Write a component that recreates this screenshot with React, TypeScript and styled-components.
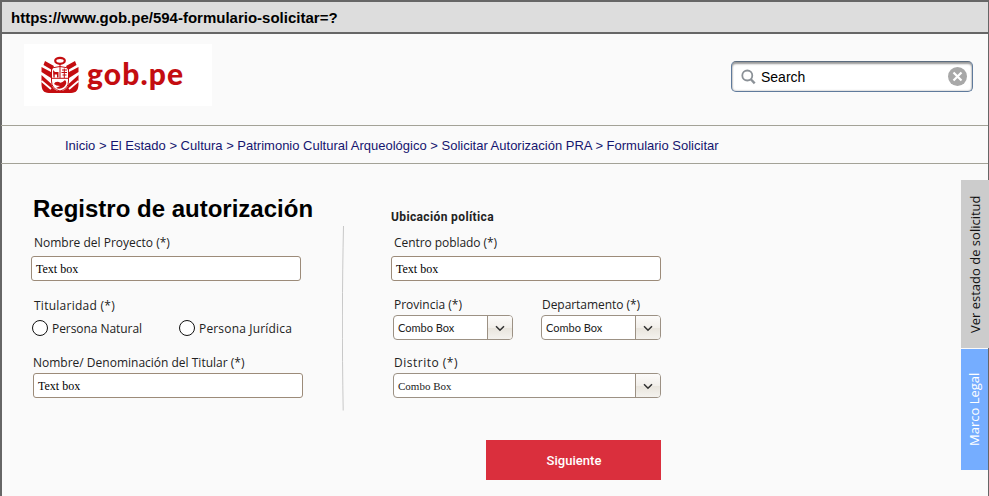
import React from 'react';
import styled, { createGlobalStyle } from 'styled-components';

const GlobalStyle = createGlobalStyle`
  * { box-sizing: border-box; }
  body { margin: 0; background: #fafafa; overflow: hidden; }
`;

const Window = styled.div`
  display: flex;
  flex-direction: column;
  height: 496px;
  width: 989px;
  border: solid #666;
  border-width: 2px 1px 0 2px;
  background: #fafafa;
  color: #000;
  font-family: 'Liberation Sans', Arial, sans-serif;
`;

const AddressBar = styled.div`
  height: 32px;
  flex: none;
  padding-left: 9px;
  border-bottom: 2px solid #666;
  background: #ddd;
  font-size: 15px;
  font-weight: bold;
  line-height: 31px;
`;

const Header = styled.header`
  display: flex;
  flex: none;
  justify-content: space-between;
  height: 91px;
  padding: 10px 15px 0 22px;
`;

const Logo = styled.div`
  display: flex;
  width: 188px;
  height: 62px;
  padding: 12px 0 0 17px;
  background: #fff;
  color: #c40d10;
`;

const LogoText = styled.span`
  margin: -3px 0 0 8px;
  font: 900 30px/40px Lato, sans-serif;
  letter-spacing: 1.1px;
`;

const SearchBox = styled.div`
  display: flex;
  align-items: center;
  width: 242px;
  height: 31px;
  margin-top: 17px;
  padding: 0 5px 0 9px;
  border: 1px solid #5f7a9c;
  border-top-color: #5c6d80;
  border-radius: 5px;
  background: #fff;
  box-shadow: inset 0 2px 2px #999, inset 0 0 2px #999;
`;

const SearchText = styled.span`
  flex: 1;
  margin-left: 5px;
  font-size: 14px;
`;

const Breadcrumbs = styled.nav`
  flex: none;
  height: 39px;
  margin-left: -1px;
  padding-left: 64px;
  border: solid #a3a297;
  border-width: 1px 0;
  color: #15156f;
  font-size: 13px;
  line-height: 39px;
  white-space: pre;
`;

const Main = styled.main`
  display: grid;
  grid-template-columns: 311px 49px 270px 1fr;
  flex: 1;
  padding-left: 29px;
  margin-right: -1px;
`;

const Column = styled.section<{ $top: number }>`
  padding-top: ${(p) => p.$top}px;
`;

const Title = styled.h1`
  margin: 0 0 0 2px;
  font-size: 24px;
  line-height: 30px;
  white-space: nowrap;
`;

const Subtitle = styled.h2`
  margin: 0;
  font: bold 12px/18px Roboto, sans-serif;
  letter-spacing: 0.37px;
  color: #222;
`;

const Label = styled.div<{ $top?: number; $bottom?: number; $left?: number; $spacing?: number }>`
  margin: ${(p) => p.$top ?? 0}px 0 ${(p) => p.$bottom ?? 0}px ${(p) => p.$left ?? 0}px;
  color: #222;
  font: 12px/18px 'Open Sans', sans-serif;
  letter-spacing: ${(p) => p.$spacing ?? 0}px;
  white-space: nowrap;
`;

const TextBox = styled.div<{ $indent?: number }>`
  width: 270px;
  height: 25px;
  margin-left: ${(p) => p.$indent ?? 0}px;
  padding-left: 4px;
  border: 1px solid #9c8b79;
  border-radius: 3px;
  background: #fff;
  font: 12px/24px 'Liberation Serif', serif;
`;

const RadioRow = styled.div`
  display: grid;
  grid-template-columns: 147px auto;
  margin: 4px 0 0 1px;
`;

const RadioOption = styled.div`
  display: flex;
  align-items: center;
  gap: 4px;
`;

const RadioCircle = styled.span`
  width: 16px;
  height: 16px;
  margin-top: -2px;
  border: 1px solid #111;
  border-radius: 50%;
  background: #fff;
`;

const ComboPair = styled.div`
  display: grid;
  grid-template-columns: 148px 120px;
  margin-left: 2px;
`;

const Combo = styled.div<{ $width: number; $left?: number; $serif?: boolean }>`
  display: flex;
  width: ${(p) => p.$width}px;
  height: 25px;
  margin-left: ${(p) => p.$left ?? 0}px;
  border: 1px solid #9c9184;
  border-radius: 4px;
  background: #fff;
  overflow: hidden;
  color: #222;
  font: ${(p) => (p.$serif ? "11px/25px 'Liberation Serif', serif" : '11px/24px Lato, sans-serif')};
`;

const ComboValue = styled.span`
  flex: 1;
  padding-left: 4px;
`;

const ComboArrow = styled.span`
  display: flex;
  align-items: center;
  justify-content: center;
  width: 25px;
  padding-top: 1px;
  border-left: 1px solid #9c9184;
  background: linear-gradient(#fcfbfa, #f2efea 50%, #e9e5dd 54%, #f4f2ee);
`;

const NextButton = styled.div`
  width: 175px;
  height: 40px;
  margin: 42px 0 0 95px;
  padding-left: 1px;
  background: #da2f3d;
  color: #fff;
  font: 500 13px/41px Roboto, sans-serif;
  letter-spacing: 0.05px;
  text-align: center;
`;

const SideTabs = styled.aside`
  display: flex;
  flex-direction: column;
  justify-self: end;
  gap: 1px;
  width: 28px;
  padding-top: 16px;
`;

const SideTab = styled.div<{ $legal?: boolean }>`
  display: flex;
  align-items: center;
  justify-content: center;
  width: ${(p) => (p.$legal ? 27 : 28)}px;
  height: ${(p) => (p.$legal ? 121 : 168)}px;
  background: ${(p) => (p.$legal ? '#75adff' : '#ccc')};
  color: ${(p) => (p.$legal ? '#fff' : '#111')};
  font: ${(p) => (p.$legal ? 500 : 400)} 13px/27px 'Open Sans', sans-serif;
  writing-mode: vertical-rl;
  transform: rotate(180deg);
  white-space: nowrap;
`;

const Crest = () => (
  <svg width="38" height="39" viewBox="0 0 38 39" fill="none">
    <g fill="#c40d10">
      <path d="M4 5 L13 10 L11 14 L2.5 9Z M.5 11 L10 16 V22 L.5 16Z M.5 19 V29 C1 36 4 37 10 37 H19 V35 C14 35 11.5 32 10.5 28Z" />
      <path d="M34 5 L25 10 L27 14 L35.5 9Z M37.5 11 L28 16 V22 L37.5 16Z M37.5 19 V29 C37 36 34 37 28 37 H19 V35 C24 35 26.5 32 27.5 28Z" />
    </g>
    <path d="M.5 25L10 33M37.5 25L28 33" stroke="#fff" strokeWidth="1.8" />
    <ellipse cx="19" cy="4.8" rx="4.8" ry="3" stroke="#c40d10" strokeWidth="2.2" />
    <path d="M10.5 12 Q19 9 27.5 12 V25 Q27.5 33 19 35 Q10.5 33 10.5 25Z M19 8V22 M10.5 22.3H27.5" stroke="#c40d10" strokeWidth="1" />
    <path d="M12 14L14 16H17.5V21.5H16V18.5H13.7V21.5H12.4Z" fill="#c40d10" />
    <path d="M21 14H26M20.5 16.5H26M21.5 19H25.5M23.3 12.5V22" stroke="#c40d10" strokeWidth="1" />
    <path d="M13 28Q14 25 18 26Q20 28 24 24Q27 27 23 31Q19 34 15 32L19 30Q15 30 13 28Z" fill="#c40d10" />
  </svg>
);

const SearchIcon = () => (
  <svg width="15" height="16" viewBox="0 0 15 16" fill="none" stroke="#8b9197">
    <circle cx="6.3" cy="6.5" r="5" strokeWidth="1.8" />
    <path d="M9.8 10.2L13.7 14.4" strokeWidth="2.3" />
  </svg>
);

const ClearIcon = () => (
  <svg width="19" height="19" viewBox="0 0 19 19">
    <circle cx="9.5" cy="9.5" r="9.5" fill="#a8a8a8" />
    <path d="M5.5 5.5L13.5 13.5M13.5 5.5L5.5 13.5" stroke="#fff" strokeWidth="2.2" />
  </svg>
);

const Chevron = () => (
  <svg width="10" height="7" viewBox="0 0 10 7" fill="none">
    <path d="M1 1.2L5 5.3L9 1.2" stroke="#333" strokeWidth="1.5" />
  </svg>
);

const Divider = () => (
  <svg width="4" height="247" viewBox="0 0 4 247" fill="none">
    <path d="M1.5 62C.2 120 0 180 1.2 246.5" stroke="#c8c8c8" />
  </svg>
);

type ComboBoxProps = { width: number; left?: number; serif?: boolean };
const ComboBox = ({ width, left, serif }: ComboBoxProps) => (
  <Combo $width={width} $left={left} $serif={serif}>
    <ComboValue>Combo Box</ComboValue>
    <ComboArrow><Chevron /></ComboArrow>
  </Combo>
);

const crumbs = ['Inicio', 'El Estado', 'Cultura', 'Patrimonio Cultural Arqueológico', 'Solicitar Autorización PRA', 'Formulario Solicitar'];

export default function App() {
  return (
    <Window>
      <GlobalStyle />
      <AddressBar>https://www.gob.pe/594-formulario-solicitar=?</AddressBar>
      <Header>
        <Logo>
          <Crest />
          <LogoText>gob.pe</LogoText>
        </Logo>
        <SearchBox>
          <SearchIcon />
          <SearchText>Search</SearchText>
          <ClearIcon />
        </SearchBox>
      </Header>
      <Breadcrumbs>{crumbs.join(' > ')}</Breadcrumbs>
      <Main>
        <Column $top={30}>
          <Title>Registro de autorización</Title>
          <Label $top={10} $bottom={4} $left={3}>Nombre del Proyecto (*)</Label>
          <TextBox>Text box</TextBox>
          <Label $top={16} $left={3} $spacing={0.26}>Titularidad (*)</Label>
          <RadioRow>
            <RadioOption><RadioCircle /><Label $top={1} $spacing={-0.06}>Persona Natural</Label></RadioOption>
            <RadioOption><RadioCircle /><Label $top={1} $spacing={0.17}>Persona Jurídica</Label></RadioOption>
          </RadioRow>
          <Label $top={16} $bottom={1} $left={2}>Nombre/ Denominación del Titular (*)</Label>
          <TextBox $indent={2}>Text box</TextBox>
        </Column>
        <Divider />
        <Column $top={44}>
          <Subtitle>Ubicación política</Subtitle>
          <Label $top={8} $bottom={4} $left={3} $spacing={-0.06}>Centro poblado (*)</Label>
          <TextBox>Text box</TextBox>
          <ComboPair>
            <div>
              <Label $top={15} $bottom={1} $left={1}>Provincia (*)</Label>
              <ComboBox width={120} />
            </div>
            <div>
              <Label $top={15} $bottom={1} $left={1} $spacing={-0.05}>Departamento (*)</Label>
              <ComboBox width={120} />
            </div>
          </ComboPair>
          <Label $top={14} $bottom={1} $left={3} $spacing={0.5}>Distrito (*)</Label>
          <ComboBox width={268} left={2} serif />
          <NextButton>Siguiente</NextButton>
        </Column>
        <SideTabs>
          <SideTab>Ver estado de solicitud</SideTab>
          <SideTab $legal>Marco Legal</SideTab>
        </SideTabs>
      </Main>
    </Window>
  );
}
